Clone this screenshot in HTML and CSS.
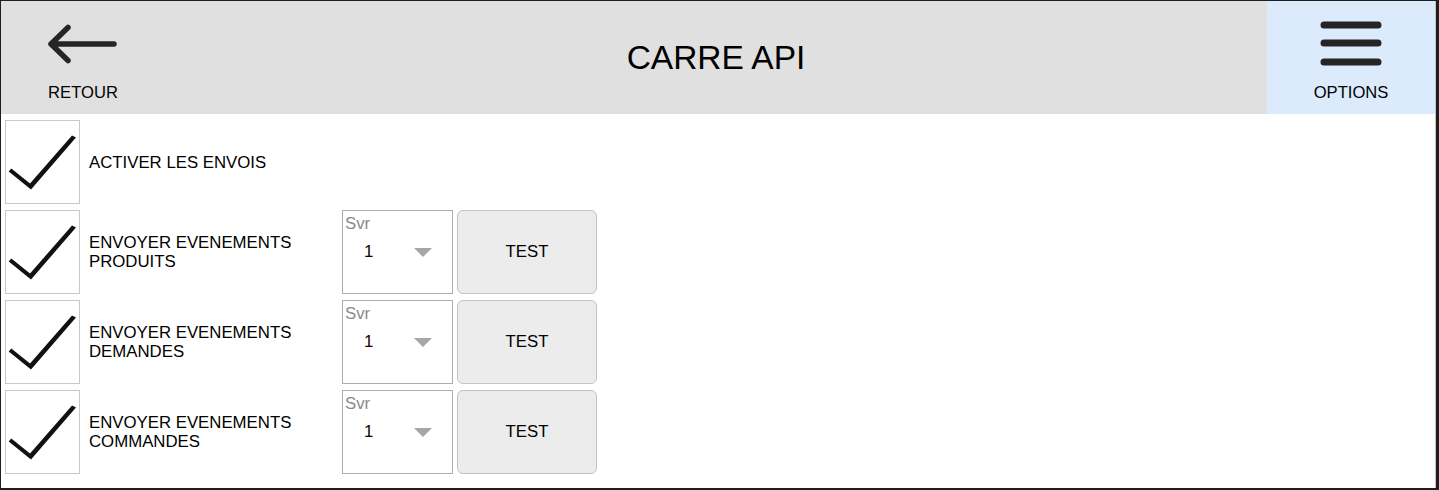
FILE: index.html
```html
<!DOCTYPE html>
<html lang="fr">
<head>
<meta charset="utf-8">
<title>CARRE API</title>
<link rel="stylesheet" href="styles.css">
</head>
<body>
<div class="window">
  <div class="inner">
    <header class="topbar">
      <div class="nav nav-back">
        <svg class="arrow" width="72" height="44" viewBox="0 0 72 44">
          <path d="M4 22 H67 M21 5.5 L4 22 L21 38.5" fill="none" stroke="#252525" stroke-width="5.5" stroke-linecap="round" stroke-linejoin="round"/>
        </svg>
        <span class="nav-label">RETOUR</span>
      </div>
      <h1 class="title">CARRE API</h1>
      <div class="nav nav-options">
        <svg class="burger" width="66" height="50" viewBox="0 0 66 50">
          <path d="M6 6 H60 M6 24 H60 M6 43 H60" fill="none" stroke="#252525" stroke-width="7" stroke-linecap="round"/>
        </svg>
        <span class="nav-label">OPTIONS</span>
      </div>
    </header>

    <main class="rows">
      <div class="row">
        <div class="check">
          <svg width="73" height="82" viewBox="0 0 73 82"><polygon points="2.7,50.5 5.3,47.5 24,62.5 66,14.5 70,16.5 25,68.5" fill="#111"/></svg>
        </div>
        <div class="label">ACTIVER LES ENVOIS</div>
      </div>

      <div class="row">
        <div class="check">
          <svg width="73" height="82" viewBox="0 0 73 82"><polygon points="2.7,50.5 5.3,47.5 24,62.5 66,14.5 70,16.5 25,68.5" fill="#111"/></svg>
        </div>
        <div class="label">ENVOYER EVENEMENTS<br>PRODUITS</div>
        <div class="select">
          <span class="select-caption">Svr</span>
          <div class="select-value"><span>1</span><span class="caret"></span></div>
        </div>
        <button class="btn">TEST</button>
      </div>

      <div class="row">
        <div class="check">
          <svg width="73" height="82" viewBox="0 0 73 82"><polygon points="2.7,50.5 5.3,47.5 24,62.5 66,14.5 70,16.5 25,68.5" fill="#111"/></svg>
        </div>
        <div class="label">ENVOYER EVENEMENTS<br>DEMANDES</div>
        <div class="select">
          <span class="select-caption">Svr</span>
          <div class="select-value"><span>1</span><span class="caret"></span></div>
        </div>
        <button class="btn">TEST</button>
      </div>

      <div class="row">
        <div class="check">
          <svg width="73" height="82" viewBox="0 0 73 82"><polygon points="2.7,50.5 5.3,47.5 24,62.5 66,14.5 70,16.5 25,68.5" fill="#111"/></svg>
        </div>
        <div class="label">ENVOYER EVENEMENTS<br>COMMANDES</div>
        <div class="select">
          <span class="select-caption">Svr</span>
          <div class="select-value"><span>1</span><span class="caret"></span></div>
        </div>
        <button class="btn">TEST</button>
      </div>
    </main>
  </div>
</div>
</body>
</html>
```

FILE: styles.css
```css
* { box-sizing: border-box; }

html, body {
  margin: 0;
  padding: 0;
  background: #ffffff;
}

body {
  font-family: "Liberation Sans", Arial, sans-serif;
  color: #000;
}

.window {
  width: 1439px;
  height: 490px;
  border-top: 1px solid #1e1e1e;
  border-left: 1px solid #1e1e1e;
  border-right: 3px solid #1e1e1e;
  border-bottom: 2px solid #1e1e1e;
  overflow: hidden;
}

.inner {
  height: 100%;
  border-right: 1px solid #c4c4c4;
}

.topbar {
  display: flex;
  height: 113px;
  background: #e0e0e0;
}

.nav {
  display: flex;
  flex-direction: column;
  align-items: center;
}

.nav-back {
  width: 164px;
  padding-top: 21px;
}

.nav-options {
  width: 168px;
  background: #dcebfc;
  padding-top: 18px;
}

.arrow { display: block; }
.burger { display: block; }

.nav-label {
  font-size: 16.6px;
  line-height: 18px;
}

.nav-back .nav-label { margin-top: 18px; }
.nav-options .nav-label { margin-top: 15px; }

.title {
  flex: 1;
  margin: 0;
  text-align: center;
  font-weight: normal;
  font-size: 33.5px;
  line-height: 113px;
  height: 113px;
}

.rows {
  display: flex;
  flex-direction: column;
  gap: 6px;
  padding: 6px 0 0 4px;
}

.row {
  display: flex;
  align-items: center;
  height: 84px;
}

.check {
  width: 75px;
  height: 84px;
  border: 1px solid #c8c8c8;
}

.check svg { display: block; }

.label {
  width: 253px;
  margin-left: 9px;
  font-size: 16.8px;
  line-height: 19px;
}

.select {
  width: 111px;
  height: 84px;
  border: 1px solid #adadad;
  display: flex;
  flex-direction: column;
}

.select-caption {
  display: block;
  margin-top: 4px;
  padding-left: 2px;
  font-size: 16.8px;
  line-height: 18px;
  color: #8a8a8a;
}

.select-value {
  display: flex;
  justify-content: space-between;
  align-items: center;
  margin-top: 10px;
  padding: 0 20px 0 21px;
  font-size: 16.8px;
  line-height: 18px;
  color: #1a0000;
}

.caret {
  width: 0;
  height: 0;
  margin-top: 1px;
  border-left: 9px solid transparent;
  border-right: 9px solid transparent;
  border-top: 9px solid #a6a6a6;
}

.btn {
  width: 140px;
  height: 84px;
  margin-left: 4px;
  background: #ececec;
  border: 1px solid #c3c3c3;
  border-radius: 6px;
  font-family: "Liberation Sans", Arial, sans-serif;
  font-size: 16.8px;
  color: #000;
  padding: 0;
}
```
